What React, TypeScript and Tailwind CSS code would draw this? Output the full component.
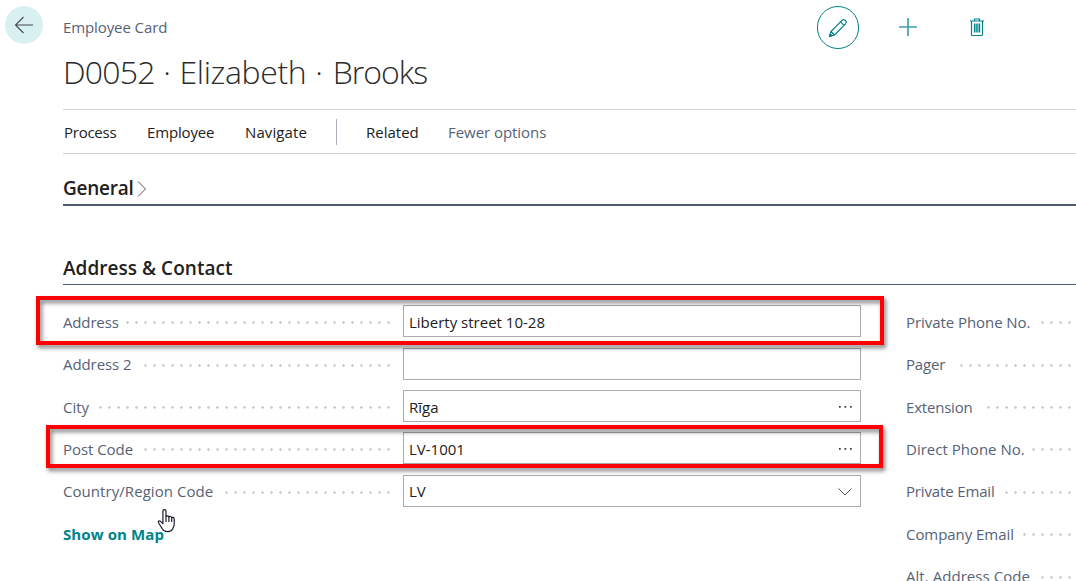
import type { ReactNode } from "react";

function Dots() {
  return (
    <span className="h-[3px] min-w-0 flex-1 bg-[radial-gradient(circle_at_center,#c8cace_0.9px,transparent_1.6px)] bg-[length:9px_3px] bg-right bg-repeat-x" />
  );
}

type Field = {
  label: string;
  spacing: string;
  gap: string;
  row: string;
  text: string;
  value?: string;
  action?: "lookup" | "select";
};

const fields: Field[] = [
  { label: "Address", spacing: "tracking-[-0.15px]", gap: "w-[61px]", row: "h-[43px]", text: "pt-[6px]", value: "Liberty street 10-28" },
  { label: "Address 2", spacing: "tracking-[-0.08px]", gap: "w-[79px]", row: "h-[42px]", text: "pt-[5px]" },
  { label: "City", spacing: "tracking-[0px]", gap: "w-[34px]", row: "h-[42px]", text: "pt-[6px]", value: "Rīga", action: "lookup" },
  { label: "Post Code", spacing: "tracking-[-0.05px]", gap: "w-[79px]", row: "h-[43px]", text: "pt-[6px]", value: "LV-1001", action: "lookup" },
  { label: "Country/Region Code", spacing: "tracking-[0.06px]", gap: "w-[160px]", row: "h-[42px]", text: "pt-[5px]", value: "LV", action: "select" },
];

const contacts: Field[] = [
  { label: "Private Phone No.", spacing: "tracking-[-0.06px]", gap: "w-[132px]", row: "h-[43px]", text: "pt-[6px]" },
  { label: "Pager", spacing: "tracking-[-0.15px]", gap: "w-[51px]", row: "h-[42px]", text: "pt-[5px]" },
  { label: "Extension", spacing: "tracking-[-0.2px]", gap: "w-[78px]", row: "h-[42px]", text: "pt-[6px]" },
  { label: "Direct Phone No.", spacing: "tracking-[0px]", gap: "w-[123px]", row: "h-[43px]", text: "pt-[6px]" },
  { label: "Private Email", spacing: "tracking-[-0.15px]", gap: "w-[96px]", row: "h-[42px]", text: "pt-[5px]" },
  { label: "Company Email", spacing: "tracking-[-0.05px]", gap: "w-[114px]", row: "h-[43px]", text: "pt-[6px]" },
  { label: "Alt. Address Code", spacing: "tracking-[0.05px]", gap: "w-[132px]", row: "h-[42px]", text: "pt-[5px]" },
];

function Label({ field }: { field: Field }) {
  return (
    <>
      <span className={`shrink-0 self-start whitespace-nowrap text-[#566276] ${field.gap} ${field.text} ${field.spacing}`}>{field.label}</span>
      <Dots />
    </>
  );
}

function ActionIcon({ action }: { action: "lookup" | "select" }) {
  if (action === "lookup") {
    return (
      <svg width="16" height="16" viewBox="0 0 16 16" fill="#33363b" className="mt-[8px]">
        <rect x="2" y="7" width="1.7" height="1.7" />
        <rect x="7.5" y="7" width="1.7" height="1.7" />
        <rect x="13" y="7" width="1.7" height="1.7" />
      </svg>
    );
  }
  return (
    <svg width="16" height="16" viewBox="0 0 16 16" fill="none" stroke="#505860" className="mt-[8px]">
      <path d="M1.5 4.5 8 11l6.5-6.5" />
    </svg>
  );
}

function FieldRow({ field, children }: { field: Field; children?: ReactNode }) {
  return (
    <div className={`relative flex shrink-0 items-start ${field.row}`}>
      <div className="flex h-[35px] w-[330px] items-center">
        <Label field={field} />
      </div>
      <div className="ml-[10px] flex h-8 w-[458px] justify-between border border-[#a9abae] bg-white pr-[7px] pl-[5px]">
        <span className={`-mt-px whitespace-nowrap text-[#212121] ${field.text}`}>{field.value}</span>
        {field.action && <ActionIcon action={field.action} />}
      </div>
      {children}
    </div>
  );
}

function HandCursor() {
  return (
    <svg width="20" height="26" viewBox="0 0 20 26" className="absolute top-[-9px] left-[93px]" fill="white" stroke="#1b1d2b" strokeWidth="1.2" strokeLinejoin="round" strokeLinecap="round">
      <path d="M6.9 15.7V3.2c0-2.1 3.1-2.1 3.1 0v5.2c.5-.9 2.7-.7 2.9.6.6-.9 2.6-.6 2.8.6.7-.6 2.500-.3 2.500 1.300v5.200c0 2.300-1 3.400-1.600 4.800-.9 1.900-2.500 2.700-4.800 2.700-2.700 0-4.500-.8-5.700-3.100L2.500 14.800c-.8-1.600.8-2.600 2-1.500z" />
      <path d="M10 8.500v5M12.900 9v4.500M15.700 9.700v3.800" fill="none" />
    </svg>
  );
}

export default function App() {
  return (
    <main className="flex h-[581px] w-[1076px] flex-col overflow-hidden bg-white font-['Open_Sans','Noto_Sans',sans-serif] text-[15px] leading-[22px]">
      <header className="flex h-[109px] shrink-0 items-start">
        <button className="mt-[6px] ml-[5px] flex size-[38px] items-center justify-center rounded-full bg-[#d9f0f2]">
          <svg width="20" height="20" viewBox="0 0 20 20" fill="none" stroke="#45484c" strokeWidth="1.1">
            <path d="M19 10H1.5M9.5 2 1.5 10l8 8" />
          </svg>
        </button>
        <div className="ml-[20px] flex w-[754px] flex-col">
          <span className="mt-[16px] tracking-[-0.1px] text-[#566276]">Employee Card</span>
          <h1 className="mt-[12px] text-[32px] leading-[44px] font-light whitespace-nowrap text-[#2b2b2b]">
            <span className="tracking-[-0.8px]">D0052</span>
            <span className="tracking-[0.2px]"> · </span>
            <span className="tracking-[-0.37px]">Elizabeth</span>
            <span className="tracking-[0.7px]"> · </span>
            <span className="tracking-[-1px]">Brooks</span>
          </h1>
        </div>
        <div className="mt-[6px] flex items-center text-[#00848a]">
          <button className="flex h-[43px] w-[42px] items-center justify-center rounded-full border border-current">
            <svg width="20" height="20" viewBox="0 0 20 20" fill="none" stroke="currentColor" strokeWidth="1.2" strokeLinejoin="round">
              <path d="M1.500 18.500 3 13.500 14 2.300q1.800-1.500 3.400.1t.1 3.500L6.500 17zM3 13.500 6.500 17M12.500 3.900 16 7.400" />
              <path d="m1.500 18.500 2.400-.8L2.300 16z" fill="currentColor" />
            </svg>
          </button>
          <svg width="20" height="20" viewBox="0 0 20 20" className="-mt-px ml-[39px] opacity-75" stroke="currentColor" strokeWidth="1.700">
            <path d="M10 1v18M1 10h18" />
          </svg>
          <svg width="16" height="20" viewBox="0 0 16 20" className="-mt-px ml-[51px]" fill="none" stroke="currentColor" strokeWidth="1.200">
            <path d="M1 4h14M5.500 4V2h5v2M2.500 4v13.500q0 1 1 1h9q1 0 1-1V4M5.500 6.500v9M7.200 6.500v9M8.900 6.500v9M10.600 6.500v9" />
          </svg>
        </div>
      </header>

      <nav className="ml-[63px] flex h-[45px] shrink-0 items-center border-y border-[#d2d4d4] text-[#212121]">
        <span className="ml-px w-[83px] tracking-[-0.25px]">Process</span>
        <span className="w-[98px] tracking-[-0.15px]">Employee</span>
        <span className="w-[91px] tracking-[0.1px]">Navigate</span>
        <span className="h-[26px] w-px bg-[#a9adb5]" />
        <span className="ml-[29px] w-[82px] tracking-[0px]">Related</span>
        <span className="tracking-[-0.05px] whitespace-nowrap text-[#566276]">Fewer options</span>
      </nav>

      <section className="ml-[63px] flex h-[52px] shrink-0 items-start border-b-2 border-[#505c6d]">
        <h2 className="mt-[21px] w-[73px] text-[19px] leading-[26px] font-semibold tracking-[-0.25px] text-[#212121]">General</h2>
        <svg width="12" height="18" viewBox="0 0 12 18" className="mt-[26px]" fill="none" stroke="#55585c">
          <path d="M2 1.500 9.500 9 2 16.500" />
        </svg>
      </section>

      <section className="ml-[63px] flex shrink-0 flex-col">
        <h2 className="h-[79px] border-b border-[#505c6d] pt-[49px] text-[19px] leading-[26px] font-semibold tracking-[0.03px] text-[#212121]">Address &amp; Contact</h2>
        <div className="flex pt-5">
          <div className="flex w-[843px] flex-col">
            {fields.map((field) => (
              <FieldRow key={field.label} field={field}>
                {field.label === "Address" && (
                  <div className="pointer-events-none absolute top-[-9px] left-[-27px] z-10 h-[49px] w-[848px] border-4 border-[#fe0000] [filter:drop-shadow(2px_3px_2px_rgba(0,0,0,0.5))]" />
                )}
                {field.label === "Post Code" && (
                  <div className="pointer-events-none absolute top-[-7px] left-[-17px] z-10 h-[43px] w-[837px] border-4 border-[#fe0000] [filter:drop-shadow(2px_3px_2px_rgba(0,0,0,0.5))]" />
                )}
              </FieldRow>
            ))}
            <div className="relative pt-[6px] font-bold text-[#00848a]">
              <span className="tracking-[0.1px]">Show on Map</span>
              <HandCursor />
            </div>
          </div>
          <div className="flex flex-1 flex-col">
            {contacts.map((field) => (
              <div key={field.label} className={`flex shrink-0 items-start ${field.row}`}>
                <div className="flex h-[35px] w-[168px] items-center">
                  <Label field={field} />
                </div>
              </div>
            ))}
          </div>
        </div>
      </section>
    </main>
  );
}
